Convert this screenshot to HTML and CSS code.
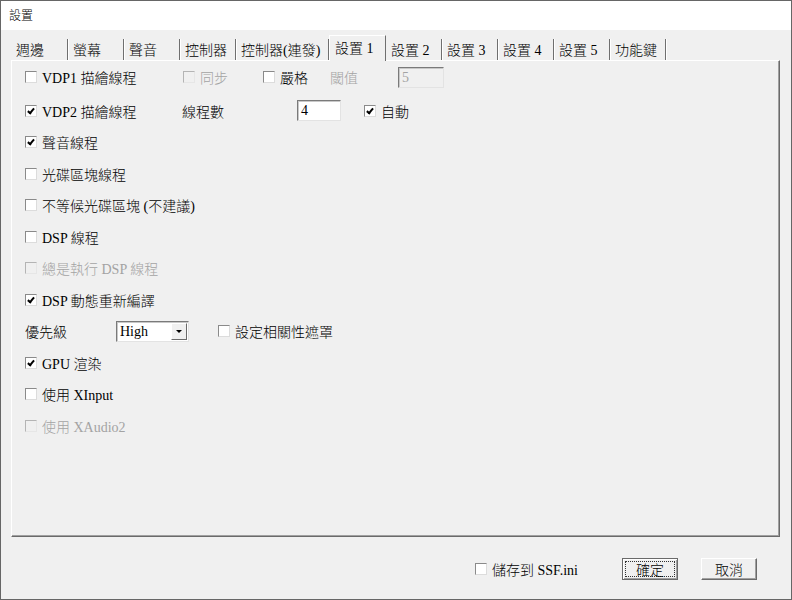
FILE: index.html
```html
<!DOCTYPE html>
<html lang="zh-Hant">
<head>
  <meta charset="UTF-8" />
  <title>設置</title>
  <link rel="stylesheet" href="styles.css">
</head>
<body>
  <div class="window">
    <div class="titlebar">設置</div>

    <div class="tabs">
      <div class="tab">週邊</div>
      <div class="tab">螢幕</div>
      <div class="tab">聲音</div>
      <div class="tab">控制器</div>
      <div class="tab tab-wide">控制器(連發)</div>
      <div class="tab active">設置 1</div>
      <div class="tab">設置 2</div>
      <div class="tab">設置 3</div>
      <div class="tab">設置 4</div>
      <div class="tab">設置 5</div>
      <div class="tab">功能鍵</div>
    </div>

    <div class="panel">
      <div class="row first">
        <label class="check w158"><span class="box"></span>VDP1 描繪線程</label>
        <label class="check disabled w80"><span class="box"></span>同步</label>
        <label class="check w67"><span class="box"></span>嚴格</label>
        <span class="text disabled w68">閾值</span>
        <span class="field disabled w46">5</span>
      </div>

      <div class="row">
        <label class="check w157"><span class="box checked"></span>VDP2 描繪線程</label>
        <span class="text w115">線程數</span>
        <span class="field w44">4</span>
        <label class="check gap23"><span class="box checked"></span>自動</label>
      </div>

      <div class="row">
        <label class="check"><span class="box checked"></span>聲音線程</label>
      </div>
      <div class="row">
        <label class="check"><span class="box"></span>光碟區塊線程</label>
      </div>
      <div class="row">
        <label class="check"><span class="box"></span>不等候光碟區塊 (不建議)</label>
      </div>
      <div class="row">
        <label class="check"><span class="box"></span>DSP 線程</label>
      </div>
      <div class="row">
        <label class="check disabled"><span class="box"></span>總是執行 DSP 線程</label>
      </div>
      <div class="row">
        <label class="check"><span class="box checked"></span>DSP 動態重新編譯</label>
      </div>

      <div class="row">
        <span class="text w91">優先級</span>
        <span class="select">
          <span class="select-value">High</span>
          <span class="select-btn"><span class="arrow"></span></span>
        </span>
        <label class="check gap29"><span class="box"></span>設定相關性遮罩</label>
      </div>

      <div class="row">
        <label class="check"><span class="box checked"></span>GPU 渲染</label>
      </div>
      <div class="row">
        <label class="check"><span class="box"></span>使用 XInput</label>
      </div>
      <div class="row">
        <label class="check disabled"><span class="box"></span>使用 XAudio2</label>
      </div>
    </div>

    <div class="footer">
      <label class="check"><span class="box"></span>儲存到 SSF.ini</label>
      <button class="btn default"><span class="focus">確定</span></button>
      <button class="btn">取消</button>
    </div>
  </div>
</body>
</html>
```

FILE: styles.css
```css
* {
  box-sizing: border-box;
}

body {
  margin: 0;
  font-family: "Liberation Serif", "Noto Sans CJK TC", serif;
  font-size: 14px;
  font-weight: 300;
  color: #000;
}

.window {
  width: 792px;
  height: 600px;
  border: 1px solid #666;
  background: #f0f0f0;
  display: flex;
  flex-direction: column;
}

.titlebar {
  height: 29px;
  background: #fff;
  padding-left: 8px;
  font-family: "Noto Sans CJK TC", sans-serif;
  font-size: 12px;
  line-height: 27px;
}

/* tab strip */
.tabs {
  display: flex;
  align-items: flex-end;
  height: 25px;
  margin-top: 5px;
  padding-left: 10px;
}

.tab {
  width: 56px;
  height: 21px;
  padding: 2px 0 0 5px;
  line-height: 20px;
  white-space: nowrap;
  border-right: 1px solid #6f6f6f;
  box-shadow: 1px 0 0 #fff;
}

.tab:first-child {
  width: 57px;
}

.tab-wide {
  width: 93px;
}

.tab.active {
  position: relative;
  z-index: 1;
  width: 57px;
  height: 26px;
  margin-bottom: -1px;
  padding: 1px 0 0 5px;
  line-height: 24px;
  background: #f0f0f0;
  border-top: 1px solid #fff;
  border-left: 1px solid #fff;
  border-right: 1px solid #6f6f6f;
  box-shadow: none;
}

/* panel */
.panel {
  height: 477px;
  margin: 0 11px 0 10px;
  padding: 0 0 0 13px;
  border-top: 1px solid #fff;
  border-left: 1px solid #fff;
  border-right: 1px solid #6a6a6a;
  border-bottom: 1px solid #6a6a6a;
  box-shadow: inset -1px -1px 0 #a0a0a0;
}

.row {
  display: flex;
  align-items: center;
  height: 31.5px;
  white-space: nowrap;
}

.row.first {
  height: 32px;
  margin-bottom: 2px;
}

.check {
  display: flex;
  align-items: center;
  gap: 5px;
}

.box {
  position: relative;
  width: 12px;
  height: 12px;
  background: #fff;
  border: 1px solid;
  border-color: #8a8a8a #dcdcdc #dcdcdc #8a8a8a;
}

.box.checked::after {
  content: "";
  position: absolute;
  left: 3px;
  top: 1px;
  width: 2px;
  height: 5px;
  border: solid #000;
  border-width: 0 2px 2px 0;
  transform: rotate(40deg);
}

.disabled {
  color: #a3a3a3;
}

.disabled .box {
  background: #f0f0f0;
  border-color: #b4b4b4 #e6e6e6 #e6e6e6 #b4b4b4;
}

.w46 { width: 46px; }
.w44 { width: 44px; }
.w67 { width: 67px; }
.w68 { width: 68px; }
.w80 { width: 80px; }
.w91 { width: 91px; }
.w115 { width: 115px; }
.w157 { width: 157px; }
.w158 { width: 158px; }
.gap23 { margin-left: 23px; }
.gap29 { margin-left: 29px; }

.field {
  height: 21px;
  padding-left: 3px;
  line-height: 19px;
  background: #fff;
  border: 1px solid;
  border-color: #7a7a7a #e3e3e3 #e3e3e3 #7a7a7a;
  box-shadow: inset 1px 1px 0 #c8c8c8;
}

.field.disabled {
  background: #f0f0f0;
}

/* combo box */
.select {
  display: flex;
  width: 73px;
  height: 21px;
  background: #fff;
  border: 1px solid;
  border-color: #7a7a7a #e3e3e3 #e3e3e3 #7a7a7a;
  box-shadow: inset 1px 1px 0 #c8c8c8;
}

.select-value {
  flex: 1;
  padding-left: 3px;
  line-height: 20px;
}

.select-btn {
  display: flex;
  align-items: center;
  justify-content: center;
  width: 16px;
  height: 17px;
  margin: 1px 1px 0 0;
  background: #f0f0f0;
  border: 1px solid;
  border-color: #fff #6a6a6a #6a6a6a #fff;
}

.arrow {
  width: 0;
  height: 0;
  border-left: 3px solid transparent;
  border-right: 3px solid transparent;
  border-top: 3px solid #000;
}

/* bottom buttons */
.footer {
  flex: 1;
  display: flex;
  align-items: center;
  justify-content: flex-end;
  padding: 2px 34px 0 0;
}

.footer .check {
  margin-right: 44px;
}

.btn {
  width: 56px;
  height: 22px;
  padding: 0;
  font-family: "Noto Sans CJK TC", sans-serif;
  font-size: 14px;
  font-weight: 300;
  line-height: 18px;
  color: #000;
  background: #f0f0f0;
  border: 1px solid;
  border-color: #fff #6a6a6a #6a6a6a #fff;
  box-shadow: inset -1px -1px 0 #a0a0a0;
}

.btn + .btn {
  margin-left: 23px;
}

.btn.default {
  border: 1px solid #6a6a6a;
  box-shadow: inset 1px 1px 0 #fff, inset -1px -1px 0 #a0a0a0;
  padding: 2px;
}

.focus {
  display: block;
  height: 100%;
  line-height: 14px;
  border: 1px dotted #333;
}
```
